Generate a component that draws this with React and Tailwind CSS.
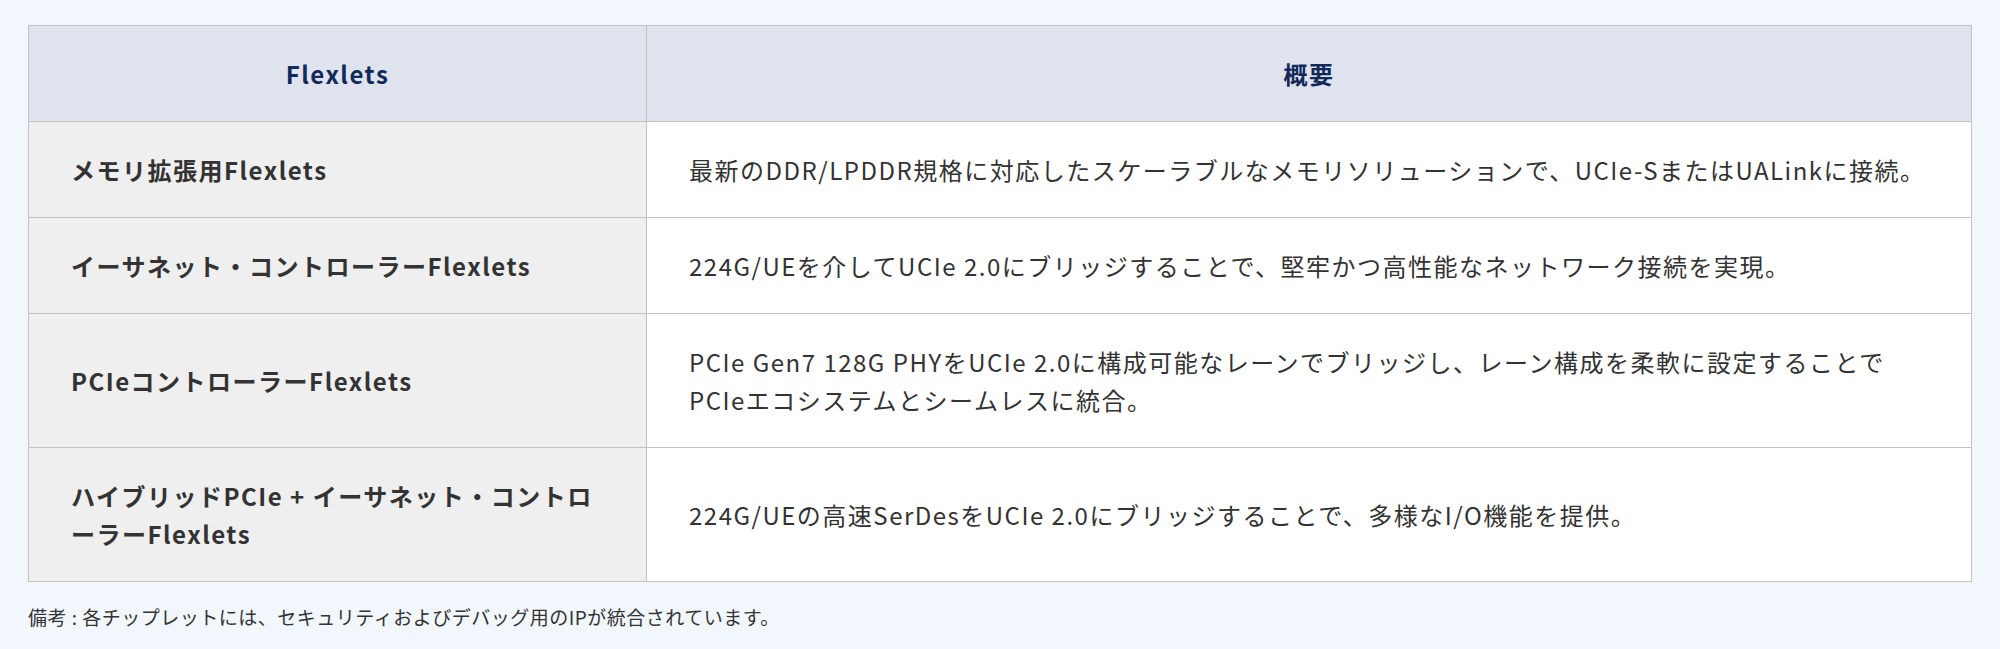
import React from 'react';

export default function App() {
    const rows = [
        {
            name: "メモリ拡張用Flexlets",
            desc: ["最新のDDR/LPDDR規格に対応したスケーラブルなメモリソリューションで、UCIe-SまたはUALinkに接続。"]
        },
        {
            name: "イーサネット・コントローラーFlexlets",
            desc: ["224G/UEを介してUCIe 2.0にブリッジすることで、堅牢かつ高性能なネットワーク接続を実現。"]
        },
        {
            name: "PCIeコントローラーFlexlets",
            desc: [
                "PCIe Gen7 128G PHYをUCIe 2.0に構成可能なレーンでブリッジし、レーン構成を柔軟に設定することで",
                "PCIeエコシステムとシームレスに統合。"
            ]
        },
        {
            name: "ハイブリッドPCIe + イーサネット・コントローラーFlexlets",
            desc: ["224G/UEの高速SerDesをUCIe 2.0にブリッジすることで、多様なI/O機能を提供。"]
        }
    ];

    return (
        <div className="min-h-[649px] bg-[#f2f6fd] px-[28px] pt-[25px] text-[#333333] font-['Noto_Sans_CJK_JP','Noto_Sans',sans-serif]">
            <table className="w-full border-collapse table-fixed tracking-[1.5px]">
                <thead>
                    <tr className="bg-[#dfe3ee]">
                        <th className="w-[618px] border border-[#c2c2c2] px-[42px] py-[28.5px] text-[24px] leading-[38px] font-bold text-center text-[#13295a]">
                            Flexlets
                        </th>
                        <th className="border border-[#c2c2c2] px-[42px] py-[28.5px] text-[24px] leading-[38px] font-bold text-center text-[#13295a]">
                            概要
                        </th>
                    </tr>
                </thead>
                <tbody>
                    {rows.map((row, i) => (
                        <tr key={i}>
                            <td className="border border-[#c2c2c2] bg-[#efefef] px-[42px] py-[28.5px] text-[24px] leading-[38px] font-bold align-middle">
                                {row.name}
                            </td>
                            <td className="border border-[#c2c2c2] bg-white px-[42px] py-[28.5px] text-[24px] leading-[38px] align-middle">
                                {row.desc.map((line, j) => (
                                    <div key={j} className="whitespace-nowrap">{line}</div>
                                ))}
                            </td>
                        </tr>
                    ))}
                </tbody>
            </table>
            <p className="mt-[20px] text-[19px] leading-[30px] tracking-[0.5px]">
                備考 : 各チップレットには、セキュリティおよびデバッグ用のIPが統合されています。
            </p>
        </div>
    );
}
